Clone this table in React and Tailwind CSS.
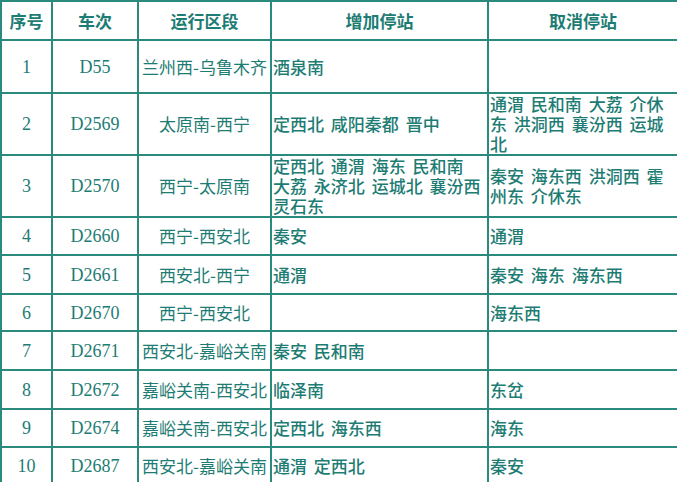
const rows = [
  { h: 53, no: "1", train: "D55", route: "兰州西-乌鲁木齐", add: ["酒泉南"], cancel: [] },
  { h: 61, no: "2", train: "D2569", route: "太原南-西宁", add: ["定西北 咸阳秦都 晋中"], cancel: ["通渭 民和南 大荔 介休", "东 洪洞西 襄汾西 运城", "北"] },
  { h: 62, no: "3", train: "D2570", route: "西宁-太原南", add: ["定西北 通渭 海东 民和南", "大荔 永济北 运城北 襄汾西", "灵石东"], cancel: ["秦安 海东西 洪洞西 霍", "州东 介休东"] },
  { h: 38, no: "4", train: "D2660", route: "西宁-西安北", add: ["秦安"], cancel: ["通渭"] },
  { h: 39, no: "5", train: "D2661", route: "西安北-西宁", add: ["通渭"], cancel: ["秦安 海东 海东西"] },
  { h: 37, no: "6", train: "D2670", route: "西宁-西安北", add: [], cancel: ["海东西"] },
  { h: 39, no: "7", train: "D2671", route: "西安北-嘉峪关南", add: ["秦安 民和南"], cancel: [] },
  { h: 39, no: "8", train: "D2672", route: "嘉峪关南-西安北", add: ["临泽南"], cancel: ["东岔"] },
  { h: 38, no: "9", train: "D2674", route: "嘉峪关南-西安北", add: ["定西北 海东西"], cancel: ["海东"] },
  { h: 37, no: "10", train: "D2687", route: "西安北-嘉峪关南", add: ["通渭 定西北"], cancel: ["秦安"] },
];

const cell = "border-2 border-[#2a8a7e] p-0 align-middle";

function Lines({ lines }) {
  return (
    <div className="flex flex-col pl-px [word-spacing:3px]">
      {lines.map((l, i) => (
        <span key={i} className="whitespace-nowrap h-[20px]">{l}</span>
      ))}
    </div>
  );
}

export default function App() {
  return (
    <div className="w-[677px] h-[482px] bg-white overflow-hidden">
      <table
        className="w-[677px] table-fixed border-collapse text-[17px] leading-[20px] text-[#1d7c73]"
        style={{ fontFamily: '"Noto Sans CJK SC", "Noto Sans", sans-serif' }}
      >
        <colgroup>
          <col className="w-[51px]" />
          <col className="w-[86px]" />
          <col className="w-[133px]" />
          <col className="w-[217px]" />
          <col className="w-[190px]" />
        </colgroup>
        <thead>
          <tr className="h-[39px] font-bold">
            <th className={cell}>序号</th>
            <th className={cell}>车次</th>
            <th className={cell}>运行区段</th>
            <th className={cell}>增加停站</th>
            <th className={cell}>取消停站</th>
          </tr>
        </thead>
        <tbody>
          {rows.map((r) => (
            <tr key={r.no} style={{ height: r.h }}>
              <td className={`${cell} text-center font-['Liberation_Serif',serif] text-[18px]`}>{r.no}</td>
              <td className={`${cell} text-center font-['Liberation_Serif',serif] text-[18px]`}>{r.train}</td>
              <td className={`${cell} text-center whitespace-nowrap`}>{r.route}</td>
              <td className={`${cell} font-medium`}><Lines lines={r.add} /></td>
              <td className={`${cell} font-medium`}><Lines lines={r.cancel} /></td>
            </tr>
          ))}
        </tbody>
      </table>
    </div>
  );
}
